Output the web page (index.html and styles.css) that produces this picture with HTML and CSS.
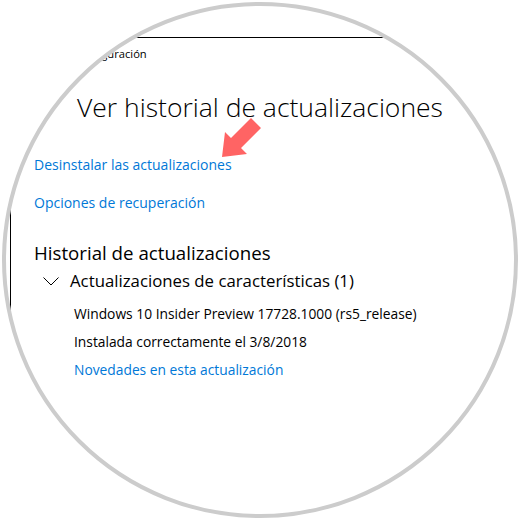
FILE: index.html
```html
<!DOCTYPE html>
<html lang="es">
<head>
    <meta charset="UTF-8">
    <title>Ver historial de actualizaciones</title>
    <link rel="stylesheet" href="styles.css">
</head>
<body>
    <div class="circle">
        <div class="window">
            <div class="titlebar">Configuración</div>
            <h1 class="page-title">Ver historial de actualizaciones</h1>
            <a class="link first" href="#">Desinstalar las actualizaciones</a>
            <a class="link second" href="#">Opciones de recuperación</a>
            <h2 class="section">Historial de actualizaciones</h2>
            <div class="group">
                <svg class="chevron" width="16" height="9" viewBox="0 0 16 9">
                    <path d="M0.5 0.5 L8 8 L15.5 0.5" fill="none" stroke="#000" stroke-width="1"/>
                </svg>
                <span>Actualizaciones de características (1)</span>
            </div>
            <div class="item">Windows 10 Insider Preview 17728.1000 (rs5_release)</div>
            <div class="item">Instalada correctamente el 3/8/2018</div>
            <a class="item link" href="#">Novedades en esta actualización</a>
        </div>

        <!-- flecha que señala el enlace -->
        <svg class="arrow" width="520" height="520" viewBox="0 0 520 520">
            <polygon points="251,118 261,128 241,148 247,154 222,157 225,132 231,138" fill="#ff6464"/>
        </svg>
    </div>
</body>
</html>
```

FILE: styles.css
```css
html, body {
    margin: 0;
    padding: 0;
    background: #fff;
}
body {
    width: 520px;
    height: 520px;
    padding: 2px;
    box-sizing: border-box;
    font-family: "Open Sans", "Noto Sans", sans-serif;
    color: #000;
}
.circle {
    position: relative;
    width: 516px;
    height: 516px;
    border: 4px solid #cccccc;
    border-radius: 50%;
    box-sizing: border-box;
    overflow: hidden;
    background: #fff;
}
.window {
    margin: 31px 0 0 4px;
    width: 700px;
    border-top: 1px solid #000;
    border-left: 1px solid #000;
    padding-left: 23px;
    box-sizing: border-box;
    height: 600px;
}
.titlebar {
    height: 32px;
    line-height: 32px;
    font-size: 11.2px;
    padding-left: 40px;
}
.page-title {
    margin: 17px 0 0 43px;
    font-size: 26.5px;
    font-weight: 300;
    line-height: 40px;
}
.link {
    display: block;
    color: #0078d7;
    text-decoration: none;
    font-size: 14px;
    line-height: 24px;
}
.link.first {
    margin-top: 26px;
}
.link.second {
    margin-top: 14px;
}
.section {
    margin: 29px 0 0;
    font-size: 18.7px;
    font-weight: 400;
    line-height: 18px;
}
.group {
    display: flex;
    align-items: center;
    gap: 11px;
    margin: 0 0 0 9px;
    font-size: 16.8px;
    line-height: 28px;
    height: 38px;
}
.chevron {
    display: block;
}
.item {
    display: block;
    margin-left: 40px;
    font-size: 13.8px;
    line-height: 28px;
    height: 28px;
}
.item.link {
    line-height: 28px;
}
.arrow {
    position: absolute;
    left: -6px;
    top: -6px;
}
```
